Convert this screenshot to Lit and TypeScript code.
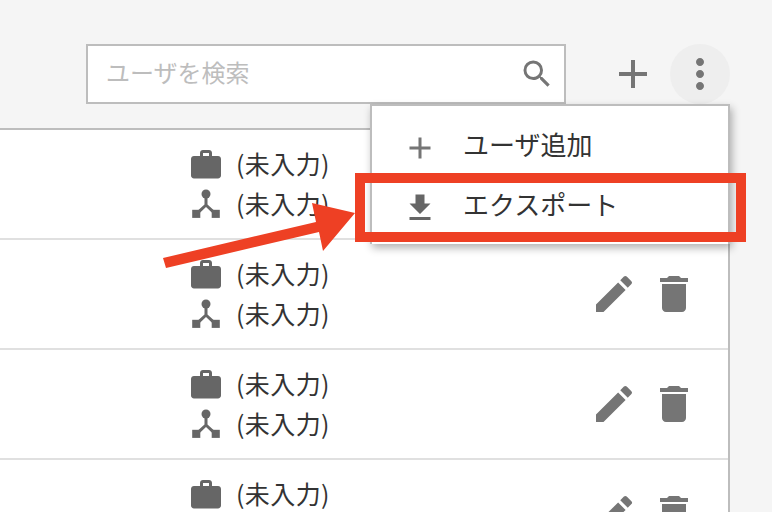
import { LitElement, html, css, svg } from "lit";
import { customElement } from "lit/decorators.js";

const icon = (d: any, cls: string) => html`<svg class=${cls} viewBox="0 0 24 24">${d}</svg>`;
const P = {
  search: svg`<path d="M15.5 14h-.79l-.28-.27A6.47 6.47 0 0 0 16 9.5 6.5 6.5 0 1 0 9.5 16c1.61 0 3.09-.59 4.23-1.57l.27.28v.79l5 4.99L20.49 19l-4.99-5zm-6 0C7.01 14 5 11.99 5 9.5S7.01 5 9.5 5 14 7.01 14 9.5 11.99 14 9.5 14z"/>`,
  add: svg`<path d="M19 13h-6v6h-2v-6H5v-2h6V5h2v6h6v2z"/>`,
  more: svg`<path d="M12 8c1.1 0 2-.9 2-2s-.9-2-2-2-2 .9-2 2 .9 2 2 2zm0 2c-1.1 0-2 .9-2 2s.9 2 2 2 2-.9 2-2-.9-2-2-2zm0 6c-1.1 0-2 .9-2 2s.9 2 2 2 2-.9 2-2-.9-2-2-2z"/>`,
  download: svg`<path d="M19 9h-4V3H9v6H5l7 7 7-7zM5 18v2h14v-2H5z"/>`,
  work: svg`<path d="M20 6h-4V4c0-1.11-.89-2-2-2h-4c-1.11 0-2 .89-2 2v2H4c-1.11 0-1.99.89-1.99 2L2 19c0 1.11.89 2 2 2h16c1.11 0 2-.89 2-2V8c0-1.11-.89-2-2-2zm-6 0h-4V4h4v2z"/>`,
  org: svg`<circle cx="12" cy="4.7" r="3"/><path d="M11 7h2v4.6l4.6 4.2-1.4 1.5L12 13.4l-4.2 3.9-1.4-1.5 4.6-4.2z"/><rect x="2.8" y="15.2" width="5.4" height="5.4"/><rect x="15.8" y="15.2" width="5.4" height="5.4"/>`,
  edit: svg`<path d="M3 17.25V21h3.75L17.81 9.94l-3.75-3.75L3 17.25zM20.71 7.04a1 1 0 0 0 0-1.41l-2.34-2.34a1 1 0 0 0-1.41 0l-1.83 1.83 3.75 3.75 1.83-1.83z"/>`,
  del: svg`<path d="M6 19c0 1.1.9 2 2 2h8c1.1 0 2-.9 2-2V7H6v12zM19 4h-3.5l-1-1h-5l-1 1H5v2h14V4z"/>`,
};

@customElement("app-root")
export class AppRoot extends LitElement {
  static styles = css`
    :host { display: block; width: 772px; height: 512px; overflow: hidden; position: relative; background: #f5f5f5; font-family: "Noto Sans CJK JP", "Noto Sans", sans-serif; color: #333; }
    svg { display: block; fill: #757575; flex: none; }
    .i36 { width: 36px; height: 36px; }
    .i48 { width: 48px; height: 48px; }
    .dark { fill: #666; }
    .top { height: 128px; box-sizing: border-box; padding: 44px 42px 0 86px; display: flex; align-items: flex-start; }
    .search { width: 480px; height: 60px; box-sizing: border-box; border: 2px solid #bdbdbd; background: #fff; display: flex; align-items: center; padding: 0 9.5px 0 18px; }
    .search span { flex: 1; font-size: 24px; line-height: 34px; padding-bottom: 4px; color: #bdbdbd; }
    .add { margin: 6px 13px 0 43px; }
    .kebab { width: 60px; height: 60px; border-radius: 50%; background: #eee; display: flex; align-items: center; justify-content: center; }
    .table { width: 730px; box-sizing: border-box; background: #fff; border-top: 2px solid #bdbdbd; border-right: 2px solid #bdbdbd; height: 384px; overflow: hidden; }
    .row { height: 110px; box-sizing: border-box; border-bottom: 2px solid #e0e0e0; display: flex; padding: 15px 30px 0 188px; }
    .cols { flex: 1; display: flex; flex-direction: column; }
    .line { height: 40px; display: flex; align-items: center; gap: 12px; font-size: 25px; letter-spacing: 0.4px; }
    .line span { line-height: 30px; padding-bottom: 4px; }
    .actions { display: flex; gap: 12px; padding-top: 15px; }
    .menu { position: absolute; left: 370px; top: 104px; width: 360px; height: 140px; box-sizing: border-box; border: 2px solid #bdbdbd; border-bottom: none; background: #fff; box-shadow: 2px 4px 8px rgba(0,0,0,.3); padding-top: 12px; }
    .item { height: 60px; display: flex; align-items: center; padding-left: 30px; gap: 26px; font-size: 26px; }
    .item span { line-height: 36px; padding-bottom: 8px; margin-left: -1px; }
    .mark { position: absolute; left: 355px; top: 173px; width: 391px; height: 69px; box-sizing: border-box; border: 10px solid #ee4024; }
    .arrow { position: absolute; left: 0; top: 0; width: 772px; height: 512px; pointer-events: none; }
    .arrow polygon { fill: #ee4024; }
  `;

  private row(full: boolean) {
    return html`<div class="row">
      <div class="cols">
        <div class="line">${icon(P.work, "i36 dark")}<span>(未入力)</span></div>
        ${full ? html`<div class="line">${icon(P.org, "i36 dark")}<span>(未入力)</span></div>` : ""}
      </div>
      <div class="actions">${icon(P.edit, "i48")}${icon(P.del, "i48")}</div>
    </div>`;
  }

  render() {
    return html`
      <div class="top">
        <div class="search"><span>ユーザを検索</span>${icon(P.search, "i36")}</div>
        <div class="add">${icon(P.add, "i48")}</div>
        <div class="kebab">${icon(P.more, "i48")}</div>
      </div>
      <div class="table">${this.row(true)}${this.row(true)}${this.row(true)}${this.row(false)}</div>
      <div class="menu">
        <div class="item">${icon(P.add, "i36")}<span>ユーザ追加</span></div>
        <div class="item">${icon(P.download, "i36 dark")}<span>エクスポート</span></div>
      </div>
      <svg class="arrow" viewBox="0 0 772 512"><polygon points="163,258 316,222 312,203 355,213 323,251 319,232 166,268"/></svg>
      <div class="mark"></div>
    `;
  }
}
